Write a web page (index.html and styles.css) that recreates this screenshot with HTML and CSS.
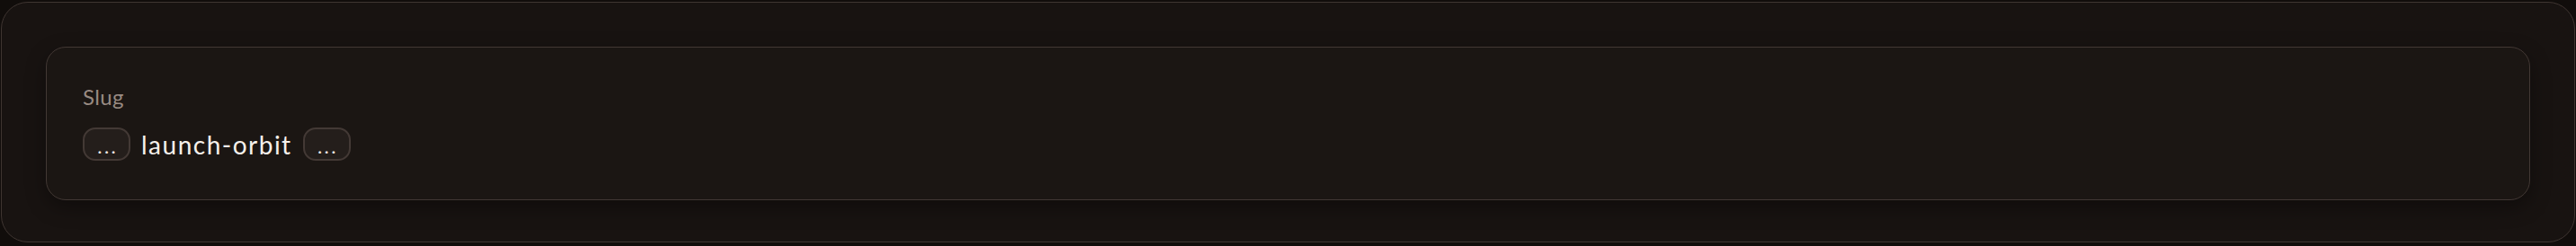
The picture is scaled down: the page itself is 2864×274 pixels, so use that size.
FILE: index.html
```html
<!DOCTYPE html>
<html lang="en">
<head>
  <meta charset="UTF-8" />
  <meta name="viewport" content="width=device-width, initial-scale=1.0"/>
  <title>Slug field</title>
  <link rel="stylesheet" href="styles.css">
</head>
<body>
  <!-- Outer panel -->
  <div class="panel">
    <!-- Slug field card -->
    <div class="field-card">
      <div class="field-label">Slug</div>
      <div class="slug-row">
        <span class="chip">...</span>
        <span class="slug-value">launch-orbit</span>
        <span class="chip">...</span>
      </div>
    </div>
  </div>
</body>
</html>
```

FILE: styles.css
```css
body {
  margin: 0;
  padding: 2px 1px 1px 1px;
  background: #110d0b;
  font-family: "Lato", "Liberation Sans", sans-serif;
}

/* Outer panel */
.panel {
  background: #181311;
  border: 1.5px solid #3f3531;
  border-radius: 30px;
  padding: 49px;
  height: 168px;
}

/* Field card */
.field-card {
  background: #1b1613;
  border: 1.5px solid #423834;
  border-radius: 22px;
  padding: 40px 40px 43px 40px;
  box-shadow: 0 8px 22px rgba(0, 0, 0, 0.35);
}

.field-label {
  color: #988a82;
  font-size: 24px;
  line-height: 30px;
  letter-spacing: 0.4px;
}

.slug-row {
  display: flex;
  align-items: center;
  gap: 12px;
  margin-top: 19px;
  height: 37px;
}

.chip {
  box-sizing: border-box;
  width: 53px;
  height: 37px;
  border: 2px solid #433935;
  border-radius: 14px;
  background: #241e1b;
  color: #ece6e1;
  font-size: 22px;
  letter-spacing: 2.5px;
  text-indent: 2.5px;
  display: flex;
  justify-content: center;
  align-items: center;
  padding-top: 4px;
}

.slug-value {
  color: #f5f0eb;
  font-size: 28px;
  letter-spacing: 1.5px;
}
```
